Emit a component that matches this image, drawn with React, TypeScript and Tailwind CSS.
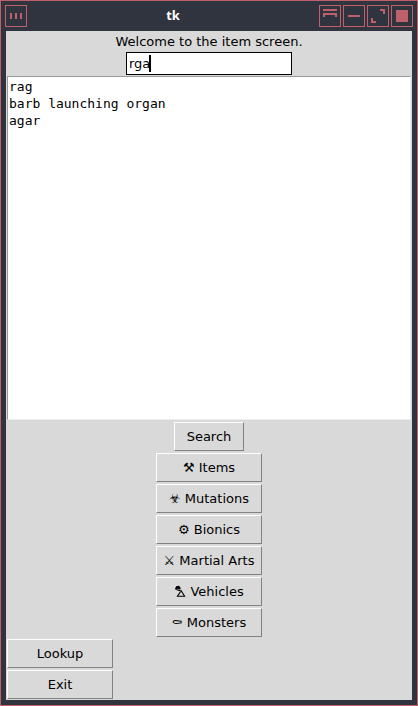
import { useState, type ReactNode } from "react";

const bevel =
  "h-[29px] border border-t-white border-l-white border-r-[#828282] border-b-[#828282] bg-[#d9d9d9] text-center whitespace-nowrap";

function DisabledCar() {
  return (
    <svg viewBox="0 0 12 13" aria-hidden="true" className="inline-block h-[13px] w-3 align-[-2px]">
      <path d="M1.2 3.2 2.2 1.2 4.8.8 6.6 2.6 6.4 4.4 4.6 4.6 4.2 3.6 2.2 4.4 1 4.4z" fill="currentColor" />
      <path d="M2.4 4.6 7.4 6.2M7.2 5.8 10.6 11.2H3.4z" fill="none" stroke="currentColor" strokeWidth="1.1" />
    </svg>
  );
}

const categories: { icon: ReactNode; label: string }[] = [
  { icon: "⚒", label: "Items" },
  { icon: "☣", label: "Mutations" },
  { icon: "⚙", label: "Bionics" },
  { icon: "⚔", label: "Martial Arts" },
  { icon: <DisabledCar />, label: "Vehicles" },
  { icon: "⚰", label: "Monsters" },
];

const results = ["rag", "barb launching organ", "agar"];

const glyphs = [
  { name: "Shade", d: "M4 4h14v2H4z M4 8h14v4h-2v-2H6v2H4z" },
  { name: "Minimize", d: "M5 10h12v2H5z" },
  { name: "Maximize", d: "M13 4h5v5h-2V6h-3z M4 13h2v3h3v2H4z" },
  { name: "Close", d: "M5 5h12v12H5z" },
];

function TitleButton({ name, d }: { name: string; d: string }) {
  return (
    <button aria-label={name} className="size-[22px] text-[#bf616a]">
      <svg viewBox="0 0 22 22" className="block size-full" shapeRendering="crispEdges">
        <path d="M.5 .5h21v21H.5z" fill="none" stroke="currentColor" />
        <path d={d} fill="currentColor" />
      </svg>
    </button>
  );
}

function TitleBar() {
  return (
    <header className="flex h-[30px] items-center px-1">
      <TitleButton name="Window menu" d="M5 8h2v6H5z M10 8h2v6h-2z M15 8h2v6h-2z" />
      <h1 className="flex-1 text-center font-['Noto_Sans',sans-serif] text-[13px] font-bold text-white">
        tk
      </h1>
      <div className="flex gap-0.5">
        {glyphs.map((g) => (
          <TitleButton key={g.name} name={g.name} d={g.d} />
        ))}
      </div>
    </header>
  );
}

export default function App() {
  const [query, setQuery] = useState("rga");
  return (
    <div className="flex min-h-screen flex-col border border-[#bf616a] bg-[#2f343f] font-['DejaVu_Sans',sans-serif] text-[13px] text-black">
      <TitleBar />
      <main className="mx-[5px] mb-[5px] flex flex-1 flex-col items-center bg-[#d9d9d9] px-px pb-px">
        <label htmlFor="query" className="h-[21px] leading-[21px]">
          Welcome to the item screen.
        </label>
        <div className="relative">
          <input
            id="query"
            value={query}
            onChange={(e) => setQuery(e.target.value)}
            className="block h-[23px] w-[166px] border border-black bg-white px-0.5 outline-none"
          />
          <span className="absolute top-[3px] left-[23px] h-[17px] w-0.5 bg-black" />
        </div>
        <ul className="mt-px min-h-[120px] w-full flex-1 border border-t-[#999999] border-l-[#999999] border-r-[#ececec] border-b-[#ececec] bg-white px-px py-px font-['DejaVu_Sans_Mono',monospace] leading-[17px]">
          {results.map((r) => (
            <li key={r}>{r}</li>
          ))}
        </ul>
        <div className="mt-0.5 flex flex-col items-center gap-0.5">
          <button className={`${bevel} w-[70px]`}>Search</button>
          {categories.map((c) => (
            <button key={c.label} className={`${bevel} w-[106px]`}>
              {c.icon} {c.label}
            </button>
          ))}
        </div>
        <div className="mt-0.5 flex flex-col gap-0.5 self-start">
          <button className={`${bevel} w-[106px]`}>Lookup</button>
          <button className={`${bevel} w-[106px]`}>Exit</button>
        </div>
      </main>
    </div>
  );
}
